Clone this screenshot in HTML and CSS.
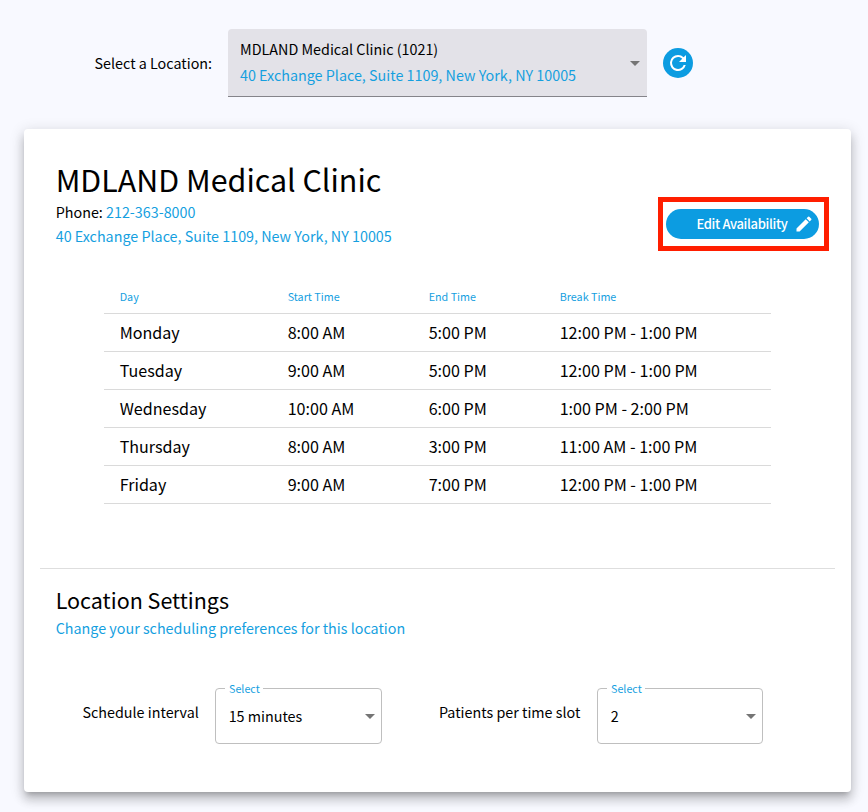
FILE: index.html
```html
<!DOCTYPE html>
<html lang="en">
<head>
<meta charset="utf-8">
<title>Clinic Availability</title>
<link rel="stylesheet" href="styles.css">
</head>
<body>
<header class="location-bar">
  <span class="location-label">Select a Location:</span>
  <div class="location-select">
    <div class="location-text">
      <div class="location-name">MDLAND Medical Clinic (1021)</div>
      <div class="location-address">40 Exchange Place, Suite 1109, New York, NY 10005</div>
    </div>
    <span class="arrow"></span>
  </div>
  <button class="refresh" aria-label="Refresh">
    <svg viewBox="0 0 24 24" width="24" height="24"><path fill="#fff" d="M17.65 6.35A7.96 7.96 0 0 0 12 4a8 8 0 1 0 7.73 10h-2.08A6 6 0 1 1 12 6c1.66 0 3.14.69 4.22 1.78L13 11h7V4z"/></svg>
  </button>
</header>
<main class="card">
  <section class="clinic">
    <div>
      <h1>MDLAND Medical Clinic</h1>
      <p class="phone">Phone: <a>212-363-8000</a></p>
      <p class="address">40 Exchange Place, Suite 1109, New York, NY 10005</p>
    </div>
    <div class="highlight">
      <button class="edit"><span>Edit Availability</span>
        <svg viewBox="0 0 24 24" width="20" height="20"><path fill="#fff" d="M3 17.25V21h3.75L17.81 9.94l-3.75-3.75zM20.71 7.04a1 1 0 0 0 0-1.41l-2.34-2.34a1 1 0 0 0-1.41 0l-1.83 1.83 3.75 3.75z"/></svg>
      </button>
    </div>
  </section>
  <table class="hours">
    <thead><tr><th class="day">Day</th><th class="start">Start Time</th><th class="end">End Time</th><th>Break Time</th></tr></thead>
    <tbody>
      <tr><td>Monday</td><td>8:00 AM</td><td>5:00 PM</td><td>12:00 PM - 1:00 PM</td></tr>
      <tr><td>Tuesday</td><td>9:00 AM</td><td>5:00 PM</td><td>12:00 PM - 1:00 PM</td></tr>
      <tr><td>Wednesday</td><td>10:00 AM</td><td>6:00 PM</td><td>1:00 PM - 2:00 PM</td></tr>
      <tr><td>Thursday</td><td>8:00 AM</td><td>3:00 PM</td><td>11:00 AM - 1:00 PM</td></tr>
      <tr><td>Friday</td><td>9:00 AM</td><td>7:00 PM</td><td>12:00 PM - 1:00 PM</td></tr>
    </tbody>
  </table>
  <hr>
  <section class="settings">
    <h2>Location Settings</h2>
    <p class="hint">Change your scheduling preferences for this location</p>
    <div class="fields">
      <span class="field-label interval">Schedule interval</span>
      <fieldset class="field"><legend>Select</legend><div class="value"><span>15 minutes</span><span class="arrow"></span></div></fieldset>
      <span class="field-label patients">Patients per time slot</span>
      <fieldset class="field slot"><legend>Select</legend><div class="value"><span>2</span><span class="arrow"></span></div></fieldset>
    </div>
  </section>
</main>
</body>
</html>
```
FILE: styles.css
```css
* { box-sizing: border-box; }
body {
  margin: 0;
  height: 812px;
  overflow: hidden;
  background: #f8f9ff;
  color: #000;
  font: 14.33px/24px "Noto Sans CJK SC", sans-serif;
  white-space: nowrap;
}
h1, h2, p { margin: 0; font-weight: 400; }
button { border: 0; padding: 0; font-family: inherit; background: #0c9ce1; color: #fff; }
.location-bar { display: flex; align-items: center; padding: 29px 0 0 94px; }
.location-label { width: 134px; padding-left: 0.5px; }
.location-select {
  display: flex; align-items: center; justify-content: space-between;
  width: 419px; height: 68px; padding: 0 7px 0 12px;
  background: #e3e2e8; border-bottom: 1px solid #85848a; border-radius: 4px 4px 0 0;
  line-height: 26px;
}
.location-text { padding-bottom: 2px; }
.location-select .arrow { margin-top: 2px; }
.location-address, .phone a, .address, .hint { color: #159fdf; }
.arrow { border: 5px solid transparent; border-top-color: #757575; border-bottom: 0; }
.refresh { display: flex; align-items: center; justify-content: center; width: 30px; height: 30px; margin-left: 16px; border-radius: 50%; }
.card {
  width: 827px; height: 663px; margin: 32px 0 0 24px; padding: 32px 16px 0;
  background: #fff; border-radius: 4px;
  box-shadow: 0 5px 5px -3px rgba(0,0,0,.2), 0 8px 10px 1px rgba(0,0,0,.14), 0 3px 14px 2px rgba(0,0,0,.12);
}
.clinic { display: flex; justify-content: space-between; padding: 0 6px 0 15.7px; }
h1 { margin-bottom: 3px; font-size: 30.4px; line-height: 36px; }
.highlight { width: 171px; height: 54px; margin-top: 36px; padding: 7px 3px; border: 5px solid #ff1e00; }
.edit { display: flex; align-items: center; justify-content: flex-end; gap: 6.5px; width: 153px; height: 30px; padding-right: 5px; border-radius: 15px; font-size: 13px; font-weight: 500; letter-spacing: -0.33px; }
.edit span { padding-bottom: 1px; }
.hours { width: 667px; margin: 28px 0 0 64px; border-collapse: collapse; table-layout: fixed; }
.hours th, .hours td { height: 38px; padding: 0 0 0 15.7px; border-bottom: 1px solid #dadada; text-align: left; font-weight: 400; }
.hours th { height: 34px; padding-top: 2px; font-size: 10.75px; color: #159fdf; }
.hours td { font-size: 16.1px; }
.day { width: 168px; }
.start { width: 141px; }
.end { width: 131px; }
hr { height: 1px; margin: 64px 0 0; border: 0; background: #dedede; }
.settings { padding: 15px 16px 0 15.7px; }
h2 { font-size: 21.5px; line-height: 32px; }
.fields { display: flex; margin-top: 42px; padding-left: 26.3px; }
.field-label { padding: 18px 0 0 0.5px; }
.interval { width: 133px; }
.patients { width: 158px; margin-left: 57px; padding-left: 0; }
.field { width: 167px; height: 62px; min-width: 0; margin: 0; padding: 0 6px 0 9px; border: 1px solid #bfbfbf; border-radius: 4px; }
.slot { width: 166px; }
legend { padding: 0 3px 0 4px; font-size: 10.75px; line-height: 13px; color: #159fdf; }
.value { display: flex; align-items: center; justify-content: space-between; height: 43px; padding-left: 3.7px; }
```
